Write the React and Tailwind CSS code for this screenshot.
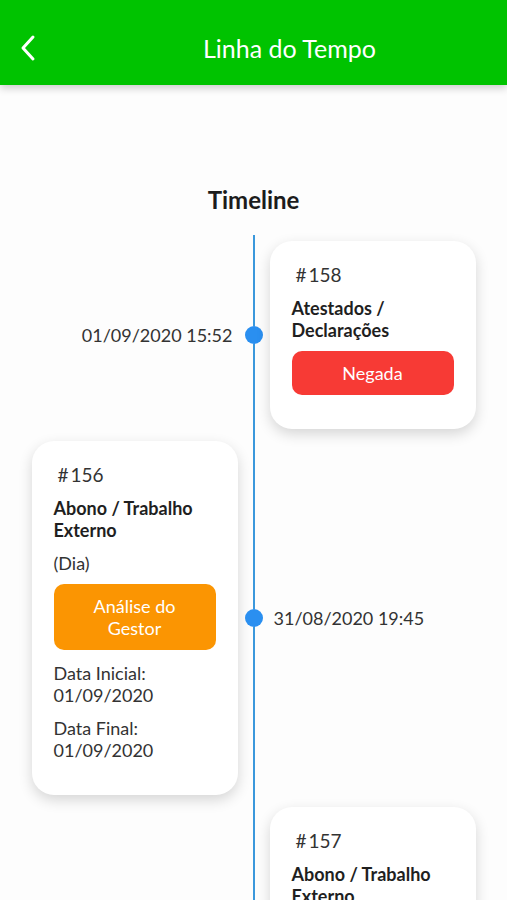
import React from "react";

const items = [
  {
    id: 158,
    side: "right",
    date: "01/09/2020 15:52",
    title: "Atestados / Declarações",
    status: "Negada",
    color: "bg-[#f73a35]",
  },
  {
    id: 156,
    side: "left",
    date: "31/08/2020 19:45",
    title: "Abono / Trabalho Externo",
    period: "(Dia)",
    status: "Análise do Gestor",
    color: "bg-[#fb9502]",
    start: "01/09/2020",
    end: "01/09/2020",
  },
  {
    id: 157,
    side: "right",
    date: "31/08/2020 19:40",
    title: "Abono / Trabalho Externo",
    period: "(Dia)",
    status: "Análise do Gestor",
    color: "bg-[#fb9502]",
    start: "31/08/2020",
    end: "31/08/2020",
  },
];

const Card = ({ item }) => (
  <div className="w-[206px] rounded-[22px] bg-white px-[22px] pt-[23px] pb-[34px] shadow-[0_5px_14px_rgba(0,0,0,0.16)]">
    <div className="pl-[4px] text-[19px] leading-[22px] text-[#333]">
      <span className="mr-[2px]">#</span>
      {item.id}
    </div>
    <div className="mt-[11px] text-[18px] leading-[22px] font-bold text-[#1f1f1f]">{item.title}</div>
    {item.period && <div className="mt-[11px] text-[18px] leading-[22px] text-[#333]">{item.period}</div>}
    <div className={`mt-[10px] rounded-[10px] ${item.color} px-[14px] py-[11px] text-center text-[18px] leading-[22px] text-white`}>
      {item.status}
    </div>
    {item.start && (
      <div className="mt-[12px] text-[18px] leading-[22px] text-[#333]">
        <div>Data Inicial:</div>
        <div>{item.start}</div>
        <div className="mt-[11px]">Data Final:</div>
        <div>{item.end}</div>
      </div>
    )}
  </div>
);

const Row = ({ item }) => (
  <div className="grid grid-cols-[1fr_32px_1fr]">
    <div className="flex items-center justify-end py-[6px]">
      {item.side === "left" ? (
        <Card item={item} />
      ) : (
        <span className="pr-[5px] text-[18px] text-[#333]">{item.date}</span>
      )}
    </div>
    <div className="flex flex-col items-center">
      <div className="w-[2px] flex-1 bg-[#3b98dc]" />
      <div className="h-[18px] w-[18px] rounded-full bg-[#2a8ff0]" />
      <div className="w-[2px] flex-1 bg-[#3b98dc]" />
    </div>
    <div className="flex items-center justify-start py-[6px]">
      {item.side === "right" ? (
        <Card item={item} />
      ) : (
        <span className="pl-[4px] text-[18px] text-[#333]">{item.date}</span>
      )}
    </div>
  </div>
);

export default function App() {
  return (
    <div className="min-h-screen overflow-hidden bg-[#fdfdfd] font-['Lato','Liberation_Sans',sans-serif]">
      <header className="flex h-[85px] items-center bg-[#00c300] pt-[11px] shadow-[0_3px_8px_rgba(0,0,0,0.2)]">
        <button className="flex h-[60px] w-[72px] items-center justify-start pl-[18px] text-white">
          <svg width="22" height="28" viewBox="0 0 22 28" fill="none" stroke="currentColor" strokeWidth="3" strokeLinecap="round" strokeLinejoin="round">
            <path d="M15 3 L5 14 L15 25" />
          </svg>
        </button>
        <h1 className="flex-1 text-center text-[25px] leading-[30px] text-white">Linha do Tempo</h1>
      </header>
      <h2 className="mt-[100px] text-center text-[24px] leading-[30px] font-bold text-[#1c1c1c]">Timeline</h2>
      <div className="mt-[20px]">
        {items.map((item) => (
          <Row key={item.id} item={item} />
        ))}
      </div>
    </div>
  );
}
